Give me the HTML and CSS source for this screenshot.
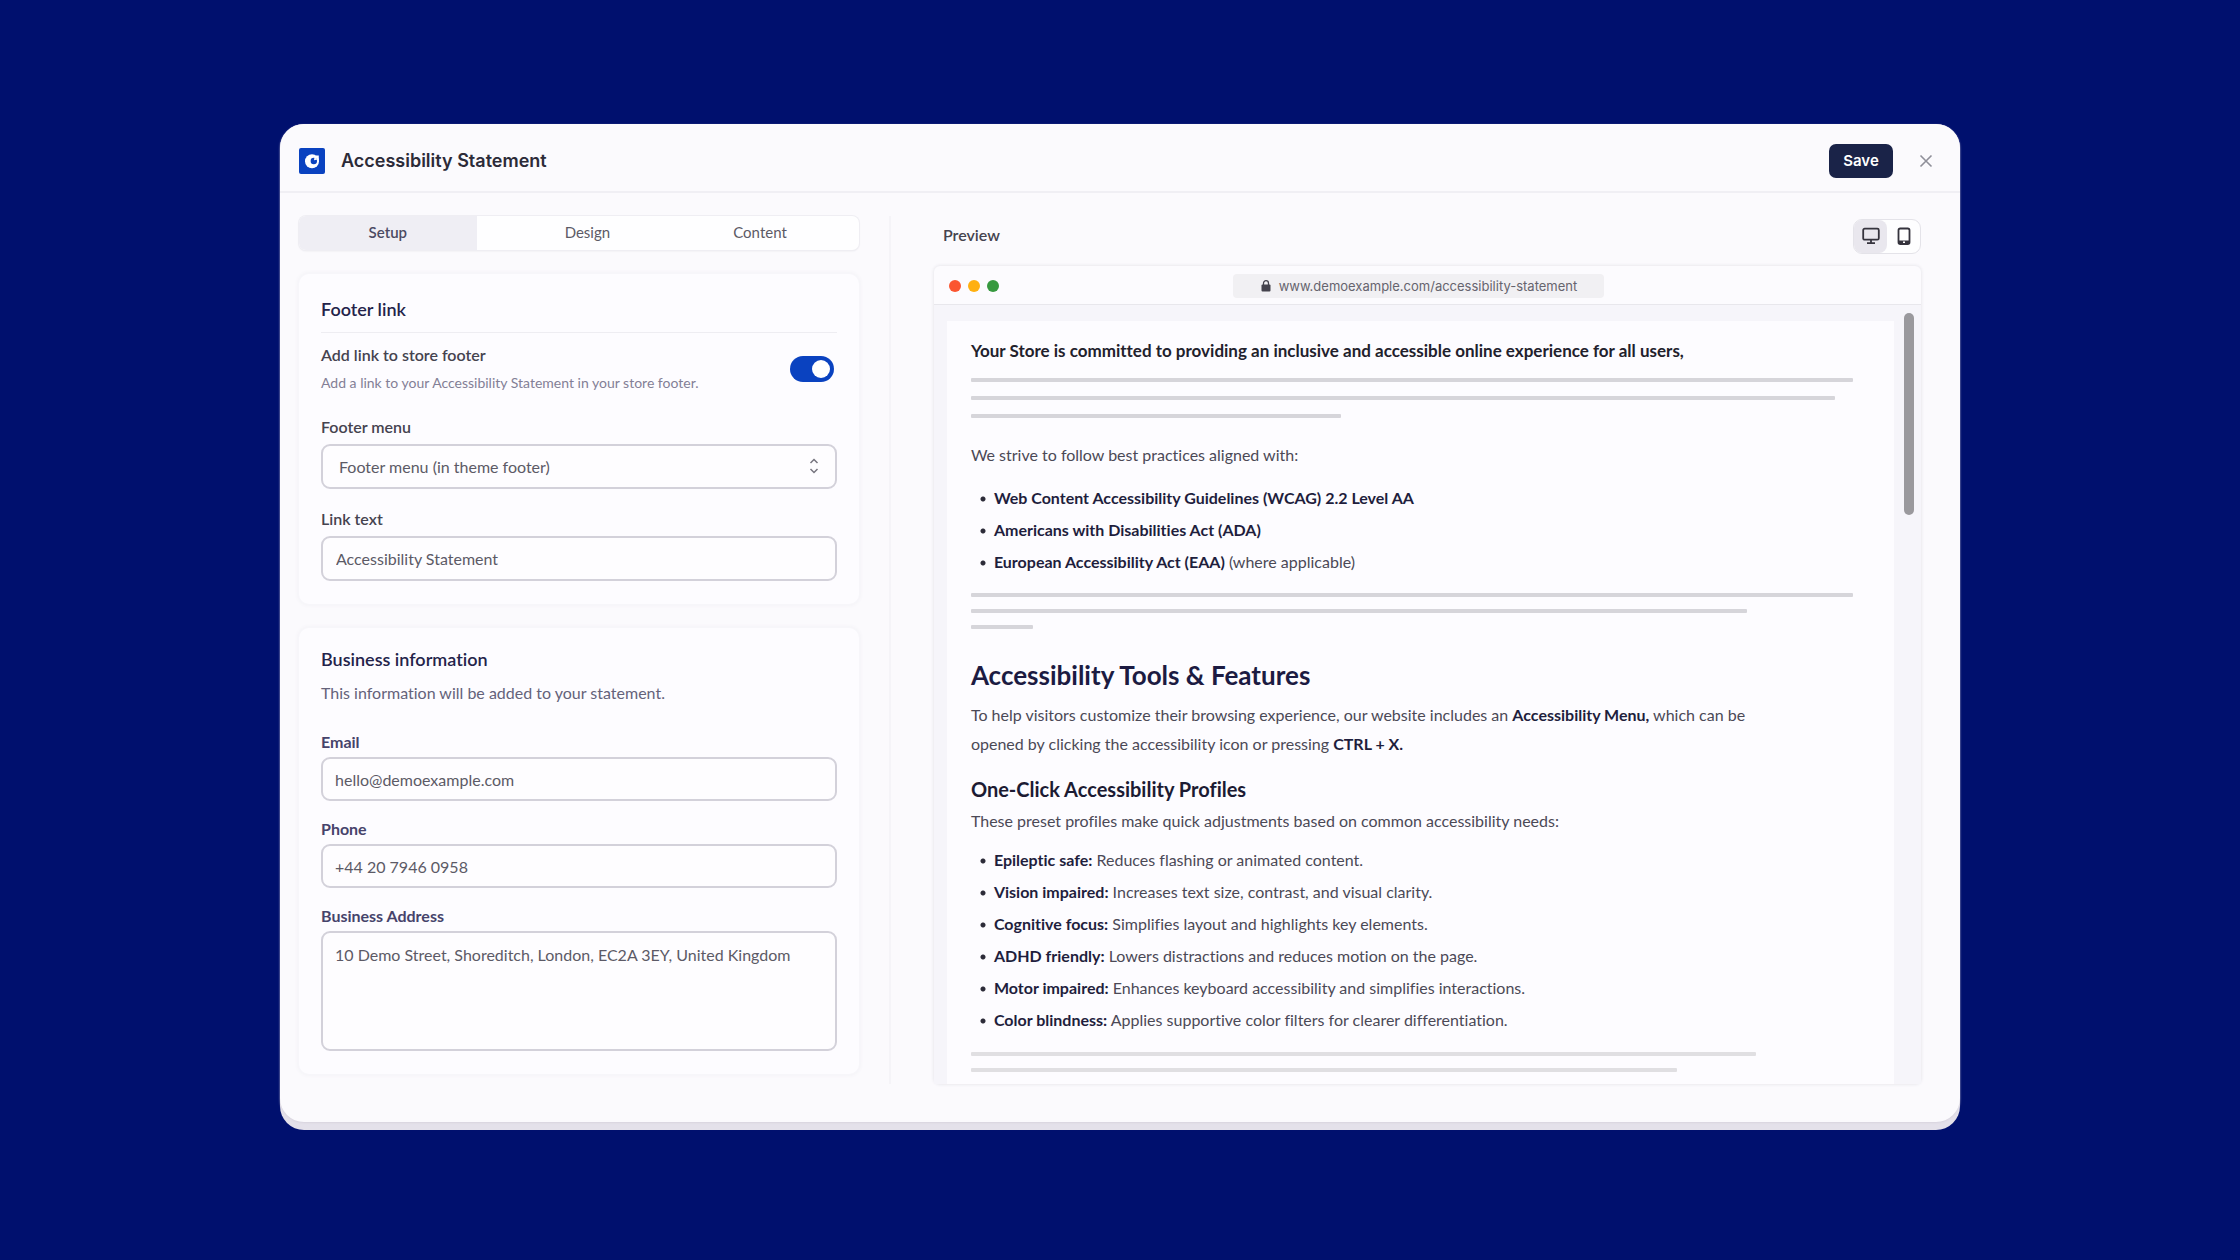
FILE: index.html
```html
<!DOCTYPE html>
<html lang="en">
<head>
<meta charset="utf-8">
<meta name="viewport" content="width=device-width, initial-scale=1">
<title>Accessibility Statement</title>
<link rel="stylesheet" href="styles.css">
</head>
<body>
<main class="window">
  <div class="surface">
    <header class="topbar">
      <svg class="logo" viewBox="0 0 26 26" aria-hidden="true">
        <rect width="26" height="26" rx="2" fill="#0a42c0"/>
        <circle cx="13" cy="13.300" r="7" fill="#fff"/>
        <path d="M17 7.500h2.800v5h-2.800z" fill="#fff"/>
        <circle cx="14.800" cy="13" r="3.200" fill="#0a42c0"/>
        <path d="M15 12.200 L15.500 9 L18.500 11.500 Z" fill="#fff"/>
      </svg>
      <h1 class="title">Accessibility Statement</h1>
      <button class="save" type="button">Save</button>
      <button class="close" type="button" aria-label="Close">
        <svg viewBox="0 0 14 14" aria-hidden="true"><path d="M1.500 1.500 12.500 12.500M12.500 1.500 1.500 12.500" fill="none" stroke="#8f8f99" stroke-width="1.600"/></svg>
      </button>
    </header>

    <div class="panes">
      <section class="settings">
        <div class="tabs" role="tablist">
          <button class="tab tab-active" type="button" role="tab" aria-selected="true">Setup</button>
          <button class="tab" type="button" role="tab" aria-selected="false">Design</button>
          <button class="tab" type="button" role="tab" aria-selected="false">Content</button>
        </div>

        <section class="card card-link">
          <h2 class="card-title card-title-ruled">Footer link</h2>
          <div class="switch-row">
            <div class="switch-text">
              <label class="label" for="footer-switch">Add link to store footer</label>
              <p class="hint">Add a link to your Accessibility Statement in your store footer.</p>
            </div>
            <input class="switch" id="footer-switch" type="checkbox" role="switch" checked>
          </div>
          <div class="field">
            <label class="label" for="footer-menu">Footer menu</label>
            <div class="select-wrap">
              <select class="control select" id="footer-menu"><option>Footer menu (in theme footer)</option></select>
              <svg class="select-icon" viewBox="0 0 10 16" aria-hidden="true"><path d="M1.500 5 5 1.500 8.500 5M1.500 11 5 14.500 8.500 11" fill="none" stroke="#77757f" stroke-width="1.500"/></svg>
            </div>
          </div>
          <div class="field">
            <label class="label" for="link-text">Link text</label>
            <input class="control" id="link-text" type="text" value="Accessibility Statement">
          </div>
        </section>

        <section class="card card-business">
          <h2 class="card-title">Business information</h2>
          <p class="card-intro">This information will be added to your statement.</p>
          <div class="field field-compact">
            <label class="label label-blue" for="email">Email</label>
            <input class="control" id="email" type="email" value="hello@demoexample.com">
          </div>
          <div class="field field-compact">
            <label class="label label-blue" for="phone">Phone</label>
            <input class="control" id="phone" type="tel" value="+44 20 7946 0958">
          </div>
          <div class="field field-compact">
            <label class="label label-blue" for="address">Business Address</label>
            <textarea class="control control-area" id="address">10 Demo Street, Shoreditch, London, EC2A 3EY, United Kingdom</textarea>
          </div>
        </section>
      </section>

      <section class="preview">
        <div class="preview-head">
          <h2 class="preview-title">Preview</h2>
          <div class="devices" role="group" aria-label="Preview device">
            <button class="device device-active" type="button" aria-label="Desktop" aria-pressed="true">
              <svg viewBox="0 0 18 18" aria-hidden="true"><rect x="1.200" y="1.700" width="15.600" height="11" rx="1.500" fill="none" stroke="#35333d" stroke-width="1.800"/><path d="M9 13v3M5 16.200h8" stroke="#35333d" stroke-width="1.800" fill="none"/></svg>
            </button>
            <button class="device" type="button" aria-label="Mobile" aria-pressed="false">
              <svg viewBox="0 0 18 18" aria-hidden="true"><rect x="3.500" y="1.500" width="11" height="15.500" rx="1.800" fill="none" stroke="#35333d" stroke-width="1.800"/><path d="M4 13.500h10v3H4z" fill="#35333d"/><path d="M8 15.200h2" stroke="#fff" stroke-width="1.400"/></svg>
            </button>
          </div>
        </div>

        <div class="browser">
          <div class="browser-bar">
            <div class="dots"><span class="dot dot-red"></span><span class="dot dot-yellow"></span><span class="dot dot-green"></span></div>
            <div class="address">
              <svg class="lock" viewBox="0 0 10 12" aria-hidden="true"><rect x="0.500" y="4.500" width="9" height="7" rx="1" fill="#45434d"/><path d="M2.500 5V3.200a2.500 2.500 0 0 1 5 0V5" fill="none" stroke="#45434d" stroke-width="1.300"/></svg>
              <span>www.demoexample.com/accessibility-statement</span>
            </div>
          </div>
          <div class="viewport">
            <article class="page">
              <p class="lead">Your Store is committed to providing an inclusive and accessible online experience for all users,</p>
              <div class="lines lines-first">
                <span class="line line-full"></span><span class="line line-long"></span><span class="line line-short"></span>
              </div>
              <p class="text">We strive to follow best practices aligned with:</p>
              <ul class="list list-laws">
                <li><strong>Web Content Accessibility Guidelines (WCAG) 2.2 Level AA</strong></li>
                <li><strong>Americans with Disabilities Act (ADA)</strong></li>
                <li><strong>European Accessibility Act (EAA)</strong> (where applicable)</li>
              </ul>
              <div class="lines">
                <span class="line line-full"></span><span class="line line-most"></span><span class="line line-stub"></span>
              </div>
              <h2 class="page-heading">Accessibility Tools &amp; Features</h2>
              <p class="text text-tools">To help visitors customize their browsing experience, our website includes an <strong>Accessibility Menu,</strong> which can be opened by clicking the accessibility icon or pressing <strong>CTRL + X.</strong></p>
              <h3 class="page-subheading">One-Click Accessibility Profiles</h3>
              <p class="text text-small">These preset profiles make quick adjustments based on common accessibility needs:</p>
              <ul class="list list-profiles">
                <li><strong>Epileptic safe:</strong> Reduces flashing or animated content.</li>
                <li><strong>Vision impaired:</strong> Increases text size, contrast, and visual clarity.</li>
                <li><strong>Cognitive focus:</strong> Simplifies layout and highlights key elements.</li>
                <li><strong>ADHD friendly:</strong> Lowers distractions and reduces motion on the page.</li>
                <li><strong>Motor impaired:</strong> Enhances keyboard accessibility and simplifies interactions.</li>
                <li><strong>Color blindness:</strong> Applies supportive color filters for clearer differentiation.</li>
              </ul>
              <div class="lines lines-last">
                <span class="line line-wide"></span><span class="line line-mid"></span>
              </div>
            </article>
            <div class="scrollbar"><span class="thumb"></span></div>
          </div>
        </div>
      </section>
    </div>
  </div>
</main>
</body>
</html>
```
FILE: styles.css
```css
* { box-sizing: border-box; }

body {
  margin: 0;
  min-height: 100vh;
  padding: 124px 12.5%;
  background: #00106e;
  color: #4b4956;
  font: 16px/20px Lato, "Open Sans", sans-serif;
  font-variant-ligatures: none;
}

h1, h2, h3, p, ul { margin: 0; padding: 0; }
button { border: 0; padding: 0; background: none; color: inherit; font: inherit; cursor: pointer; }
svg { display: block; }

.window {
  border-radius: 24px;
  padding-bottom: 8px;
  background: #e4e1ea;
}
.surface {
  border-radius: 24px;
  background: #fbfafd;
  box-shadow: 0 1px 2px #d8d4de;
}

.topbar {
  display: flex;
  align-items: center;
  height: 69px;
  padding: 7px 24px 0 19px;
  border-bottom: 2px solid #f0eff4;
}
.logo { width: 26px; height: 26px; }
.title {
  flex: 1;
  margin-left: 16px;
  color: #2c2b38;
  font: 600 18px/24px Inter, sans-serif;
}
.save {
  width: 64px;
  height: 34px;
  border-radius: 7px;
  background: #1a2348;
  color: #fff;
  font: 600 15px/20px Inter, sans-serif;
}
.close {
  display: grid;
  place-items: center;
  width: 20px;
  height: 20px;
  margin-left: 23px;
}
.close svg { width: 14px; height: 14px; }

.panes {
  display: grid;
  grid-template-columns: 4fr 7fr;
  padding: 23px 0 38px;
}

/* Settings column */
.settings {
  display: flex;
  flex-direction: column;
  padding: 0 30px 8px 19px;
  border-right: 2px solid #f5f4f8;
}
.tabs {
  display: grid;
  grid-template-columns: 178fr 222fr 124fr;
  height: 34px;
  padding-right: 37px;
  border-radius: 7px;
  background: #fefeff;
  box-shadow: 0 0 0 1px #efeef3, 0 1px 2px #e4e3e9;
}
.tab { padding-bottom: 2px; color: #5c5a66; font-size: 15px; }
.tab-active {
  border-radius: 7px 0 0 7px;
  background: #efeef4;
  color: #4b4a62;
  font-weight: 600;
}
.card {
  border-radius: 10px;
  padding: 23px 22px;
  background: #fdfcff;
  box-shadow: 0 0 0 1px #f7f6fa, 0 0 4px 1px #f1f0f5;
}
.card-link { margin-top: 24px; }
.card-business { margin-top: 24px; padding-top: 19px; }
.card-title { color: #24234a; font-size: 18px; line-height: 24px; font-weight: 600; }
.card-title-ruled {
  padding-bottom: 11px;
  border-bottom: 1px solid #eeedf2;
}
.card-intro { margin-top: 12px; color: #64627a; }
.switch-row {
  display: flex;
  align-items: center;
  justify-content: space-between;
  margin-top: 12px;
}
.label { display: block; color: #45434f; font-weight: 600; }
.label-blue { color: #46436b; font-weight: 700; }
.hint { margin-top: 8px; color: #837f96; font-size: 14px; }
.switch {
  appearance: none;
  width: 44px;
  height: 26px;
  margin: 0 3px 0 0;
  padding: 4px;
  border-radius: 13px;
  background: #0a42c0;
}
.switch::before {
  content: "";
  display: block;
  width: 18px;
  height: 18px;
  margin-left: auto;
  border-radius: 50%;
  background: #fff;
}
.field { margin-top: 20px; }
.switch-row + .field { margin-top: 24px; }
.field-compact { margin-top: 18px; }
.card-intro + .field-compact { margin-top: 29px; }
.control {
  display: block;
  width: 100%;
  height: 45px;
  margin: 7px 0 0;
  padding: 0 13px;
  border: 2px solid #d3d1da;
  border-radius: 9px;
  background: #fefdff;
  color: #5c5a66;
  font: inherit;
}
.select { appearance: none; padding: 0 16px; }
.select-wrap { display: grid; align-items: center; }
.select-wrap > * { grid-area: 1 / 1; }
.select-icon {
  justify-self: end;
  width: 10px;
  height: 16px;
  margin: 6px 18px 0 0;
  pointer-events: none;
}
.field-compact .control { height: 44px; margin-top: 5px; padding: 0 12px; }
.field-compact .control-area {
  height: 120px;
  padding: 12px;
  resize: none;
}

/* Preview column */
.preview {
  display: flex;
  flex-direction: column;
  padding: 2px 39px 0 43px;
}
.preview-head {
  display: flex;
  align-items: center;
  justify-content: space-between;
  height: 36px;
  padding-left: 9px;
}
.preview-title { padding-bottom: 2px; color: #45434f; font-size: 16px; font-weight: 600; }
.devices {
  display: flex;
  border: 1px solid #e4e3e9;
  border-radius: 9px;
  background: #fefeff;
}
.device {
  display: grid;
  place-items: center;
  width: 33px;
  height: 33px;
}
.device svg { width: 18px; height: 18px; }
.device-active { border-radius: 8px; background: #e9e7ee; }

.browser {
  flex: 1;
  display: flex;
  flex-direction: column;
  margin-top: 12px;
  border-radius: 6px;
  background: #fcfbfe;
  box-shadow: 0 0 3px 1px #ebeaef;
}
.browser-bar {
  display: grid;
  grid-template-columns: 1fr auto 1fr;
  align-items: center;
  height: 39px;
  padding: 2px 16px 0 15px;
  border-bottom: 1px solid #e8e7ec;
}
.dots { display: flex; gap: 7px; }
.dot { width: 12px; height: 12px; border-radius: 50%; }
.dot-red { background: #fb5530; }
.dot-yellow { background: #ffb010; }
.dot-green { background: #37993f; }
.address {
  display: flex;
  align-items: center;
  justify-content: center;
  gap: 8px;
  width: 371px;
  height: 24px;
  margin-right: 16px;
  border-radius: 4px;
  background: #f1f0f3;
  color: #66646e;
  font: 13px/20px Inter, sans-serif;
}
.lock { width: 10px; height: 12px; }

.viewport {
  flex: 1;
  display: flex;
  padding: 8px 7px 0 13px;
  background: #f6f5fa;
}
.page {
  flex: 1;
  margin-top: 8px;
  padding: 20px 41px 12px 24px;
  background: #fdfcff;
}
.scrollbar { width: 20px; padding-left: 10px; }
.thumb {
  display: block;
  height: 202px;
  border-radius: 5px;
  background: #9a999d;
}
.lead { color: #22212c; font-size: 17px; font-weight: 700; }
.text { line-height: 20px; }
.text strong, .list strong { color: #1f1e3d; font-weight: 700; }
.lines {
  display: flex;
  flex-direction: column;
  gap: 12px;
  margin-top: 15px;
}
.line { height: 4px; border-radius: 1px; background: #d6d5da; }
.line-full { width: 100%; }
.line-long { width: 98%; }
.line-wide { width: 89%; }
.line-most { width: 88%; }
.line-mid { width: 80%; }
.line-short { width: 42%; }
.line-stub { width: 7%; }
.lines-first { gap: 14px; margin: 17px 0 27px; }
.lines-last { margin-top: 16px; }
.lines-last .line { background: #e0dfe2; }
.list { list-style: none; }
.list li {
  display: block;
  padding-left: 23px;
  line-height: 32px;
  background: radial-gradient(circle at 12px 17px, #2c2b38 2px, transparent 3px);
}
.list-laws { margin-top: 17px; }
.list-profiles { margin-top: 13px; }
.page-heading {
  margin-top: 30px;
  color: #1c1b42;
  font-size: 26px;
  line-height: 32px;
  font-weight: 700;
}
.text-tools { max-width: 820px; margin-top: 9px; line-height: 29px; }
.page-subheading {
  margin: 19px 0 10px;
  color: #1c1b33;
  font-size: 20px;
  line-height: 24px;
  font-weight: 700;
}
```
